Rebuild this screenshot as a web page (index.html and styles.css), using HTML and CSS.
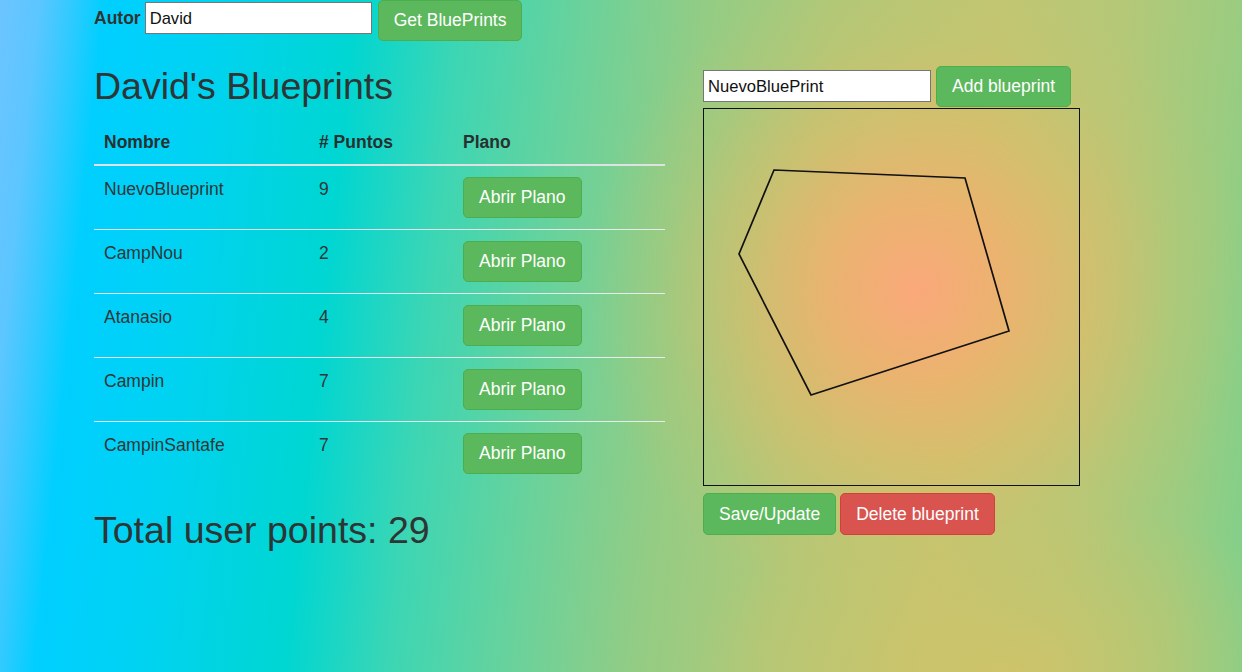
FILE: index.html
```html
<!DOCTYPE html>
<html lang="es">
<head>
<meta charset="utf-8">
<title>Blueprints</title>
<link rel="stylesheet" href="styles.css">
</head>
<body>
<div class="page">
  <div class="author-bar">
    <label class="author-label">Autor</label>
    <input class="text-input author-input" type="text" value="David">
    <button class="btn btn-success">Get BluePrints</button>
  </div>
  <div class="main">
    <div class="left-col">
      <h2 class="title">David's Blueprints</h2>
      <table class="bp-table">
        <thead>
          <tr><th class="col-name">Nombre</th><th class="col-points"># Puntos</th><th class="col-plan">Plano</th></tr>
        </thead>
        <tbody>
          <tr><td>NuevoBlueprint</td><td>9</td><td><button class="btn btn-success">Abrir Plano</button></td></tr>
          <tr><td>CampNou</td><td>2</td><td><button class="btn btn-success">Abrir Plano</button></td></tr>
          <tr><td>Atanasio</td><td>4</td><td><button class="btn btn-success">Abrir Plano</button></td></tr>
          <tr><td>Campin</td><td>7</td><td><button class="btn btn-success">Abrir Plano</button></td></tr>
          <tr><td>CampinSantafe</td><td>7</td><td><button class="btn btn-success">Abrir Plano</button></td></tr>
        </tbody>
      </table>
      <h2 class="total">Total user points: 29</h2>
    </div>
    <div class="right-col">
      <div class="new-row">
        <input class="text-input name-input" type="text" value="NuevoBluePrint">
        <button class="btn btn-success">Add blueprint</button>
      </div>
      <div class="canvas">
        <svg class="canvas-svg" width="375" height="376" viewBox="0 0 375 376">
          <polygon points="70,61 261,69 305,222 107,286 35,145" fill="none" stroke="#111" stroke-width="1.7" stroke-linejoin="miter"/>
        </svg>
      </div>
      <div class="actions">
        <button class="btn btn-success">Save/Update</button>
        <button class="btn btn-danger">Delete blueprint</button>
      </div>
    </div>
  </div>
</div>
</body>
</html>
```
FILE: styles.css
```css
html, body {
  margin: 0;
  padding: 0;
  height: 100%;
}

body {
  font-family: "Liberation Sans", Arial, sans-serif;
  font-size: 17.5px;
  line-height: 25px;
  color: #333;
  background:
    radial-gradient(circle at 917px 290px, rgba(250, 168, 122, 1) 0, rgba(242, 176, 110, 0.85) 90px, rgba(228, 186, 104, 0.55) 175px, rgba(214, 192, 104, 0.2) 255px, rgba(210, 195, 100, 0) 330px),
    radial-gradient(ellipse 320px 180px at 1010px 672px, rgba(212, 194, 102, 0.75), rgba(212, 194, 102, 0)),
    linear-gradient(96deg, #6cc4ff 0%, #5cc6ff 3%, #30caff 5.5%, #00cfff 8%, #00d2f4 15%, #00d6d2 27%, #3cd6b4 35%, #68d29c 44%, #94cc84 54%, #b0c878 64%, #c0c672 76%, #b4c878 86%, #9ccc80 94%, #7ed08c 100%);
  background-repeat: no-repeat;
  min-height: 672px;
}

.page {
  padding-left: 94px;
}

.author-bar {
  display: flex;
  align-items: flex-start;
}

.author-label {
  font-weight: bold;
  margin-top: 6px;
  margin-right: 4px;
}

.text-input {
  box-sizing: border-box;
  height: 32px;
  border: 1px solid #767676;
  background: #fff;
  color: #111;
  font-family: "Liberation Sans", Arial, sans-serif;
  font-size: 16.6px;
  padding: 2px 4px 1px;
  margin: 0;
  outline: none;
}

.author-input {
  width: 227px;
  margin-top: 2px;
  margin-right: 6px;
}

.btn {
  box-sizing: border-box;
  height: 41px;
  padding: 7px 15px;
  font-family: "Liberation Sans", Arial, sans-serif;
  font-size: 17.5px;
  line-height: 25px;
  border: 1px solid transparent;
  border-radius: 5px;
  color: #fff;
  cursor: pointer;
  white-space: nowrap;
}

.btn-success {
  background: #5cb85c;
  border-color: #4cae4c;
}

.btn-danger {
  background: #d9534f;
  border-color: #d43f3a;
}

.main {
  display: flex;
  align-items: flex-start;
  gap: 38px;
}

.left-col {
  width: 571px;
}

.title,
.total {
  font-size: 37.5px;
  line-height: 41px;
  font-weight: normal;
  margin: 25px 0 13px;
  color: #2d3535;
}

.bp-table {
  width: 571px;
  border-collapse: collapse;
  table-layout: fixed;
}

.bp-table th {
  text-align: left;
  font-weight: bold;
  padding: 10px 10px;
  line-height: 24px;
  border-bottom: 2px solid #dde3e3;
  color: #283030;
}

.col-name { width: 195px; }
.col-points { width: 124px; }
.col-plan { width: 192px; }

.bp-table td {
  padding: 11px 10px;
  line-height: 24px;
  vertical-align: top;
  color: #2d3838;
}

.bp-table tbody tr + tr td {
  border-top: 1px solid #e4ecec;
}

.bp-table td .btn {
  display: block;
}

.right-col {
  display: flex;
  flex-direction: column;
  align-items: flex-start;
  padding-top: 25px;
}

.new-row {
  display: flex;
  align-items: flex-start;
}

.name-input {
  width: 228px;
  margin-top: 4px;
  margin-right: 5px;
}

.canvas {
  width: 375px;
  height: 376px;
  border: 1px solid #111;
  margin-top: 1px;
}

.canvas-svg {
  display: block;
}

.actions {
  display: flex;
  gap: 4px;
  margin-top: 7px;
}

.actions .btn {
  height: 42px;
}
```
